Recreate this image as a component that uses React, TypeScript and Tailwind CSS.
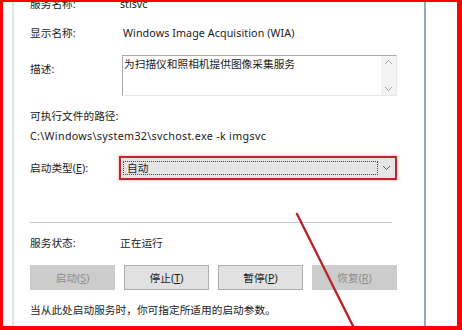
import React from 'react';

const font = { fontFamily: '"Noto Sans", "Noto Sans CJK SC", sans-serif' };

function Row({ label, children, className = '' }: { label: React.ReactNode; children?: React.ReactNode; className?: string }) {
  return (
    <div className={`flex items-center h-[16px] ${className}`}>
      <span className="w-[90px] shrink-0">{label}</span>
      {children}
    </div>
  );
}

function Btn({ label, hot, disabled }: { label: string; hot: string; disabled?: boolean }) {
  return (
    <button
      className={`w-[85px] h-[25px] flex items-center justify-center border ${
        disabled ? 'bg-[#cccccc] border-[#cccccc] text-[#8c8c8c]' : 'bg-[#e1e1e1] border-[#adadad] text-[#1a1a1a]'
      }`}
    >
      {label}(<span className="underline">{hot}</span>)
    </button>
  );
}

export default function App() {
  return (
    <div
      className="relative w-[462px] h-[330px] overflow-hidden bg-white border-[#f00] border-l-[3px] border-t-[2px] border-r-[5px] border-b-[4px] text-[10.7px] text-[#1a1a1a] leading-[14px]"
      style={font}
    >
      <div className="flex h-full">
        {/* left tab edge */}
        <div className="w-[9px] shrink-0" />
        <div className="w-[2px] shrink-0 bg-[#e4e4e4]" />

        {/* dialog content */}
        <div className="w-[367px] shrink-0 ml-[16px] flex flex-col">
          {/* first row is cut by the top edge, as in the screenshot */}
          <Row label="服务名称:" className="-mt-[6px]">
            <span>stisvc</span>
          </Row>
          <Row label="显示名称:" className="mt-[13px]">
            <span className="ml-[3px] tracking-[0.1px]">Windows Image Acquisition (WIA)</span>
          </Row>

          <div className="flex mt-[14px]">
            <span className="w-[92px] shrink-0 mt-[6px] h-[16px] flex items-center">描述:</span>
            <div className="flex w-[275px] h-[41px] border-t border-l border-[#a9a9a9] border-r border-r-[#e8e8e8] border-b border-b-[#e8e8e8]">
              <div className="flex-1 pl-[1px] pt-[1px]">为扫描仪和照相机提供图像采集服务</div>
              <div className="w-[15px] bg-[#f3f3f3] flex flex-col items-center justify-between py-[3px] text-[#a8a8a8]">
                <svg width="9" height="6" viewBox="0 0 9 6" fill="none" stroke="currentColor" strokeWidth="1">
                  <path d="M1 5l3.5-3.5L8 5" />
                </svg>
                <svg width="9" height="6" viewBox="0 0 9 6" fill="none" stroke="currentColor" strokeWidth="1">
                  <path d="M1 1l3.5 3.5L8 1" />
                </svg>
              </div>
            </div>
          </div>

          <div className="mt-[12px] h-[16px] flex items-center">可执行文件的路径:</div>
          <div className="mt-[4px] h-[16px] flex items-center tracking-[0.33px]">C:\Windows\system32\svchost.exe -k imgsvc</div>

          <div className="flex items-center mt-[12px]">
            <span className="w-[89px] shrink-0">
              启动类型(<span className="underline">E</span>):
            </span>
            <div className="w-[278px] h-[24px] border-[2.5px] border-[#bd262c] bg-[#e5e5e5] shadow-[0_0_2px_1px_#f6c6c8] flex items-center">
              <div className="flex-1 h-[14px] ml-[2px] border border-dotted border-[#444] flex items-center pl-[3px]">自动</div>
              <div className="w-[17px] flex justify-center text-[#606060]">
                <svg width="9" height="6" viewBox="0 0 9 6" fill="none" stroke="currentColor" strokeWidth="1">
                  <path d="M1 1l3.5 3.5L8 1" />
                </svg>
              </div>
            </div>
          </div>

          <div className="mt-[42px] h-px w-[362px] bg-[#c8c8c8]" />

          <Row label="服务状态:" className="mt-[12px]">
            <span>正在运行</span>
          </Row>

          <div className="mt-[14px] flex gap-[9px]">
            <Btn label="启动" hot="S" disabled />
            <Btn label="停止" hot="T" />
            <Btn label="暂停" hot="P" />
            <Btn label="恢复" hot="R" disabled />
          </div>

          <div className="mt-[12px] h-[16px] flex items-center whitespace-nowrap">
            当从此处启动服务时，你可指定所适用的启动参数。
          </div>
        </div>

        {/* right edge of dialog */}
        <div className="w-[27px] shrink-0" />
        <div className="w-[1.5px] shrink-0 bg-[#8fa9c2]" />
      </div>

      {/* annotation arrow line */}
      <svg className="absolute left-[-3px] top-[-2px]" width="462" height="330" viewBox="0 0 462 330">
        <line x1="296.5" y1="213" x2="357" y2="334" stroke="#b8262b" strokeWidth="2.4" />
      </svg>
    </div>
  );
}
